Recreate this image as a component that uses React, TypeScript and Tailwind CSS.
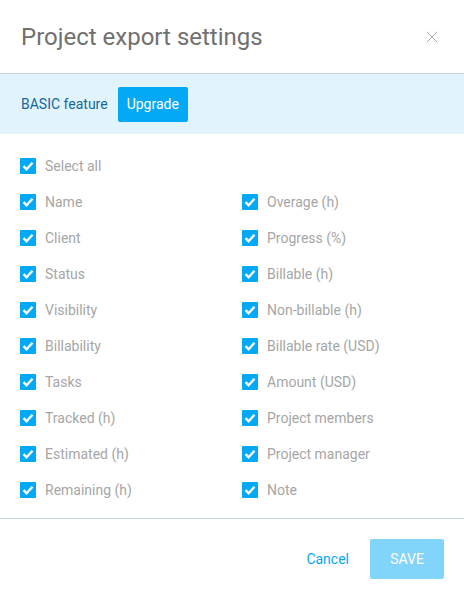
import { X } from 'lucide-react';

const leftCol = ['Name', 'Client', 'Status', 'Visibility', 'Billability', 'Tasks', 'Tracked (h)', 'Estimated (h)', 'Remaining (h)'];
const rightCol = ['Overage (h)', 'Progress (%)', 'Billable (h)', 'Non-billable (h)', 'Billable rate (USD)', 'Amount (USD)', 'Project members', 'Project manager', 'Note'];

function Check({ label }: { label: string }) {
  return (
    <label className="flex items-center h-9 gap-[9px] cursor-pointer">
      <span className="w-4 h-4 bg-[#03a9f4] rounded-[1px] flex items-center justify-center shrink-0">
        <svg width="12" height="10" viewBox="0 0 12 10">
          <path d="M1.5 5.2 L4.6 8.2 L10.5 1.8" fill="none" stroke="white" strokeWidth="2.4" />
        </svg>
      </span>
      <span className="text-sm text-[#a6a6a6]">{label}</span>
    </label>
  );
}

export default function App() {
  return (
    <div className="w-[464px] h-[599px] bg-white font-['Roboto',sans-serif] flex flex-col">
      {/* Header */}
      <div className="h-[74px] flex items-center justify-between pl-[21px] pr-[22px] border-b border-[#c6d2d9]">
        <h2 className="text-2xl text-[#707070]">Project export settings</h2>
        <X className="w-5 h-5 text-[#aaaaaa]" strokeWidth={1.2} />
      </div>

      {/* Banner */}
      <div className="h-[60px] bg-[#e1f4fd] flex items-center gap-[10px] pl-[21px]">
        <span className="text-sm text-[#14679a]">BASIC feature</span>
        <button className="h-[35px] px-[9px] bg-[#03a9f4] text-white text-sm rounded-[2px]">Upgrade</button>
      </div>

      {/* Options */}
      <div className="pt-[14px] pb-[10px] pl-5 border-b border-[#c6d2d9]">
        <Check label="Select all" />
        <div className="grid grid-cols-[222px_1fr]">
          <div>
            {leftCol.map((l) => (
              <Check key={l} label={l} />
            ))}
          </div>
          <div>
            {rightCol.map((l) => (
              <Check key={l} label={l} />
            ))}
          </div>
        </div>
      </div>

      {/* Footer */}
      <div className="flex items-center justify-end pt-5 pr-5 gap-[21px]">
        <button className="text-sm text-[#03a9f4]">Cancel</button>
        <button className="w-[74px] h-10 bg-[#81d4fa] text-white text-sm rounded-[2px]">SAVE</button>
      </div>
    </div>
  );
}
